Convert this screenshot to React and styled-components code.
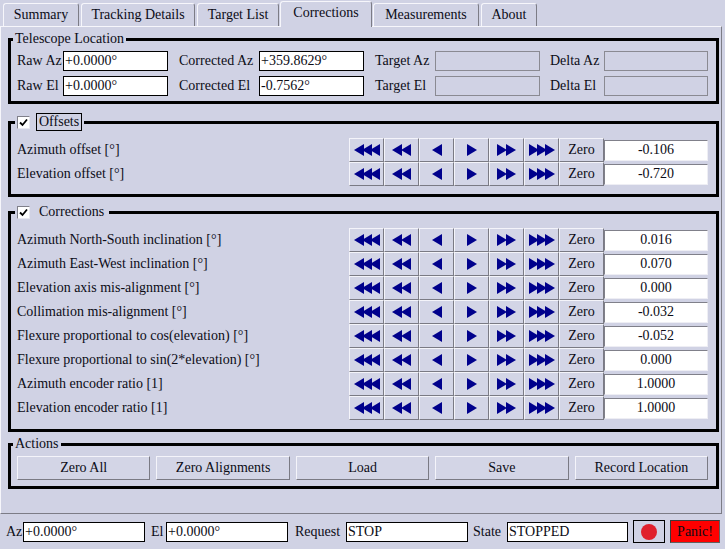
import React from "react";
import styled, { createGlobalStyle } from "styled-components";

const GlobalStyle = createGlobalStyle`
  html, body {
    margin: 0;
    padding: 0;
    background: #d0d2e4;
  }
  body {
    font-family: "Liberation Serif", serif;
    font-size: 14px;
    color: #0c0c16;
  }
`;

const Window = styled.div`
  width: 725px;
  height: 549px;
  display: flex;
  flex-direction: column;
  background: #d0d2e4;
  overflow: hidden;
`;

const TabBar = styled.div`
  display: flex;
  align-items: flex-end;
  gap: 2px;
  height: 27px;
  padding-left: 3px;
`;

const Tab = styled.div`
  width: ${(p) => p.$w}px;
  height: ${(p) => (p.$active ? 26 : 23)}px;
  margin: ${(p) => (p.$active ? "0 -1px 0 -1px" : "0 0 1px 0")};
  box-sizing: border-box;
  display: flex;
  align-items: center;
  justify-content: center;
  background: #d0d2e4;
  border: 1px solid;
  border-bottom: none;
  border-color: #f6f6fb #7c7c86 transparent #f6f6fb;
  border-radius: 3px 3px 0 0;
  padding-bottom: ${(p) => (p.$active ? 3 : 0)}px;
  position: relative;
  z-index: ${(p) => (p.$active ? 2 : 0)};
`;

const Panel = styled.div`
  width: 722px;
  height: 488px;
  box-sizing: border-box;
  margin-top: -1px;
  border: 1px solid;
  border-color: #f6f6fb #7c7c86 #7c7c86 #f6f6fb;
  position: relative;
  z-index: 1;
`;

const Frame = styled.fieldset`
  margin: ${(p) => p.$mt}px 0 0 7px;
  width: 711px;
  box-sizing: border-box;
  border: 3px solid #000;
  padding: 0;
  min-width: 0;
`;

const Legend = styled.legend`
  margin-left: ${(p) => p.$ml}px;
  padding: 0 2px;
  line-height: 16px;
  display: flex;
  align-items: center;
  gap: 6px;
`;

const CheckBox = styled.span`
  width: 13px;
  height: 13px;
  box-sizing: border-box;
  background: #fff;
  border: 1px solid;
  border-color: #80808a #e8e8f0 #e8e8f0 #80808a;
  display: flex;
  align-items: center;
  justify-content: center;
`;

const CheckLabel = styled.span`
  padding: 0 2px;
  border: 1px solid ${(p) => (p.$focus ? "#000" : "transparent")};
`;

const Body = styled.div`
  padding: ${(p) => p.$pad};
  display: flex;
  flex-direction: column;
  gap: ${(p) => p.$gap || 0}px;
`;

const FieldRow = styled.div`
  display: flex;
  height: 20px;
`;

const Field = styled.div`
  display: flex;
  align-items: center;
  margin-right: ${(p) => p.$mr || 0}px;
`;

const FieldLabel = styled.span`
  width: ${(p) => p.$w}px;
  white-space: nowrap;
`;

const TextBox = styled.div`
  width: ${(p) => p.$w}px;
  height: 20px;
  flex: none;
  box-sizing: border-box;
  border: 1px solid ${(p) => (p.$disabled ? "#8a8a92" : "#000")};
  background: ${(p) => (p.$disabled ? "transparent" : "#fff")};
  padding-left: 1px;
  line-height: 18px;
  white-space: nowrap;
  overflow: hidden;
`;

const AdjRow = styled.div`
  display: grid;
  grid-template-columns: 1fr repeat(6, 35px) 45px 104px;
  height: 24px;
  align-items: center;
`;

const RaisedButton = styled.div`
  height: 24px;
  box-sizing: border-box;
  border: 1px solid;
  border-color: #f4f4fa #7a7a84 #7a7a84 #f4f4fa;
  background: #d3d5e6;
  display: flex;
  align-items: center;
  justify-content: center;
  flex: ${(p) => (p.$grow ? 1 : "none")};
`;

const ValueBox = styled.div`
  height: 21px;
  box-sizing: border-box;
  background: #fff;
  border: 1px solid;
  border-color: #80808a #eeeef4 #eeeef4 #80808a;
  display: flex;
  align-items: center;
  justify-content: center;
`;

const ActionRow = styled.div`
  display: flex;
  gap: 6px;
`;

const StatusBar = styled.div`
  flex: 1;
  display: flex;
  align-items: center;
  padding-left: 6px;
`;

const StatusLabel = styled.span`
  width: ${(p) => p.$w}px;
  padding-left: ${(p) => p.$lead || 0}px;
  flex: none;
  white-space: nowrap;
`;

const RecordButton = styled.div`
  width: 32px;
  height: 23px;
  box-sizing: border-box;
  margin-left: 5px;
  border: 1px solid #000;
  display: flex;
  align-items: center;
  justify-content: center;
`;

const RecordDot = styled.span`
  width: 16px;
  height: 16px;
  border-radius: 50%;
  background: #e0202c;
`;

const PanicButton = styled.div`
  width: 50px;
  height: 23px;
  box-sizing: border-box;
  margin-left: 5px;
  background: #ff0000;
  border: 1px solid;
  border-color: #3a3a3a #606060 #606060 #3a3a3a;
  display: flex;
  align-items: center;
  justify-content: center;
`;

function Arrows({ count, right }) {
  const step = count === 3 ? 8 : 9;
  const w = 10 + step * (count - 1);
  const tris = [];
  for (let i = 0; i < count; i++) {
    const x = i * step;
    tris.push(<polygon key={i} points={`${x},6 ${x + 10},0 ${x + 10},12`} />);
  }
  return (
    <svg width={w} height="12" viewBox={`0 0 ${w} 12`} fill="#00008c">
      <g transform={right ? `translate(${w},0) scale(-1,1)` : undefined}>{tris}</g>
    </svg>
  );
}

function Check() {
  return (
    <svg width="9" height="9" viewBox="0 0 9 9">
      <path d="M1 4.5 L3.5 7 L8 1.5" stroke="#000" strokeWidth="1.8" fill="none" />
    </svg>
  );
}

function AdjustRow({ label, value }) {
  return (
    <AdjRow>
      <span>{label}</span>
      <RaisedButton><Arrows count={3} /></RaisedButton>
      <RaisedButton><Arrows count={2} /></RaisedButton>
      <RaisedButton><Arrows count={1} /></RaisedButton>
      <RaisedButton><Arrows count={1} right /></RaisedButton>
      <RaisedButton><Arrows count={2} right /></RaisedButton>
      <RaisedButton><Arrows count={3} right /></RaisedButton>
      <RaisedButton>Zero</RaisedButton>
      <ValueBox>{value}</ValueBox>
    </AdjRow>
  );
}

const tabs = [
  ["Summary", 76],
  ["Tracking Details", 114],
  ["Target List", 82],
  ["Corrections", 92],
  ["Measurements", 106],
  ["About", 56],
];

const corrections = [
  ["Azimuth North-South inclination [°]", "0.016"],
  ["Azimuth East-West inclination [°]", "0.070"],
  ["Elevation axis mis-alignment [°]", "0.000"],
  ["Collimation mis-alignment [°]", "-0.032"],
  ["Flexure proportional to cos(elevation) [°]", "-0.052"],
  ["Flexure proportional to sin(2*elevation) [°]", "0.000"],
  ["Azimuth encoder ratio [1]", "1.0000"],
  ["Elevation encoder ratio [1]", "1.0000"],
];

export default function App() {
  return (
    <Window>
      <GlobalStyle />
      <TabBar>
        {tabs.map(([name, w]) => (
          <Tab key={name} $w={w} $active={name === "Corrections"}>
            {name}
          </Tab>
        ))}
      </TabBar>
      <Panel>
        <Frame $mt={4}>
          <Legend $ml={2}>Telescope Location</Legend>
          <Body $pad="4px 0 5px 6px" $gap={5}>
            <FieldRow>
              <Field $mr={11}><FieldLabel $w={46}>Raw Az</FieldLabel><TextBox $w={105}>+0.0000°</TextBox></Field>
              <Field $mr={11}><FieldLabel $w={80}>Corrected Az</FieldLabel><TextBox $w={105}>+359.8629°</TextBox></Field>
              <Field $mr={10}><FieldLabel $w={60}>Target Az</FieldLabel><TextBox $w={105} $disabled /></Field>
              <Field><FieldLabel $w={54}>Delta Az</FieldLabel><TextBox $w={104} $disabled /></Field>
            </FieldRow>
            <FieldRow>
              <Field $mr={11}><FieldLabel $w={46}>Raw El</FieldLabel><TextBox $w={105}>+0.0000°</TextBox></Field>
              <Field $mr={11}><FieldLabel $w={80}>Corrected El</FieldLabel><TextBox $w={105}>-0.7562°</TextBox></Field>
              <Field $mr={10}><FieldLabel $w={60}>Target El</FieldLabel><TextBox $w={105} $disabled /></Field>
              <Field><FieldLabel $w={54}>Delta El</FieldLabel><TextBox $w={104} $disabled /></Field>
            </FieldRow>
          </Body>
        </Frame>

        <Frame $mt={9}>
          <Legend $ml={4}>
            <CheckBox><Check /></CheckBox>
            <CheckLabel $focus>Offsets</CheckLabel>
          </Legend>
          <Body $pad="7px 8px 8px 6px">
            <AdjustRow label="Azimuth offset [°]" value="-0.106" />
            <AdjustRow label="Elevation offset [°]" value="-0.720" />
          </Body>
        </Frame>

        <Frame $mt={6}>
          <Legend $ml={4}>
            <CheckBox><Check /></CheckBox>
            <CheckLabel>Corrections</CheckLabel>
          </Legend>
          <Body $pad="7px 8px 9px 6px">
            {corrections.map(([label, value]) => (
              <AdjustRow key={label} label={label} value={value} />
            ))}
          </Body>
        </Frame>

        <Frame $mt={4}>
          <Legend $ml={2}>Actions</Legend>
          <Body $pad="4px 8px 6px 6px">
            <ActionRow>
              <RaisedButton $grow>Zero All</RaisedButton>
              <RaisedButton $grow>Zero Alignments</RaisedButton>
              <RaisedButton $grow>Load</RaisedButton>
              <RaisedButton $grow>Save</RaisedButton>
              <RaisedButton $grow>Record Location</RaisedButton>
            </ActionRow>
          </Body>
        </Frame>
      </Panel>

      <StatusBar>
        <StatusLabel $w={17}>Az</StatusLabel>
        <TextBox $w={122}>+0.0000°</TextBox>
        <StatusLabel $w={15} $lead={6}>El</StatusLabel>
        <TextBox $w={122}>+0.0000°</TextBox>
        <StatusLabel $w={51} $lead={7}>Request</StatusLabel>
        <TextBox $w={122}>STOP</TextBox>
        <StatusLabel $w={34} $lead={5}>State</StatusLabel>
        <TextBox $w={121}>STOPPED</TextBox>
        <RecordButton><RecordDot /></RecordButton>
        <PanicButton>Panic!</PanicButton>
      </StatusBar>
    </Window>
  );
}
